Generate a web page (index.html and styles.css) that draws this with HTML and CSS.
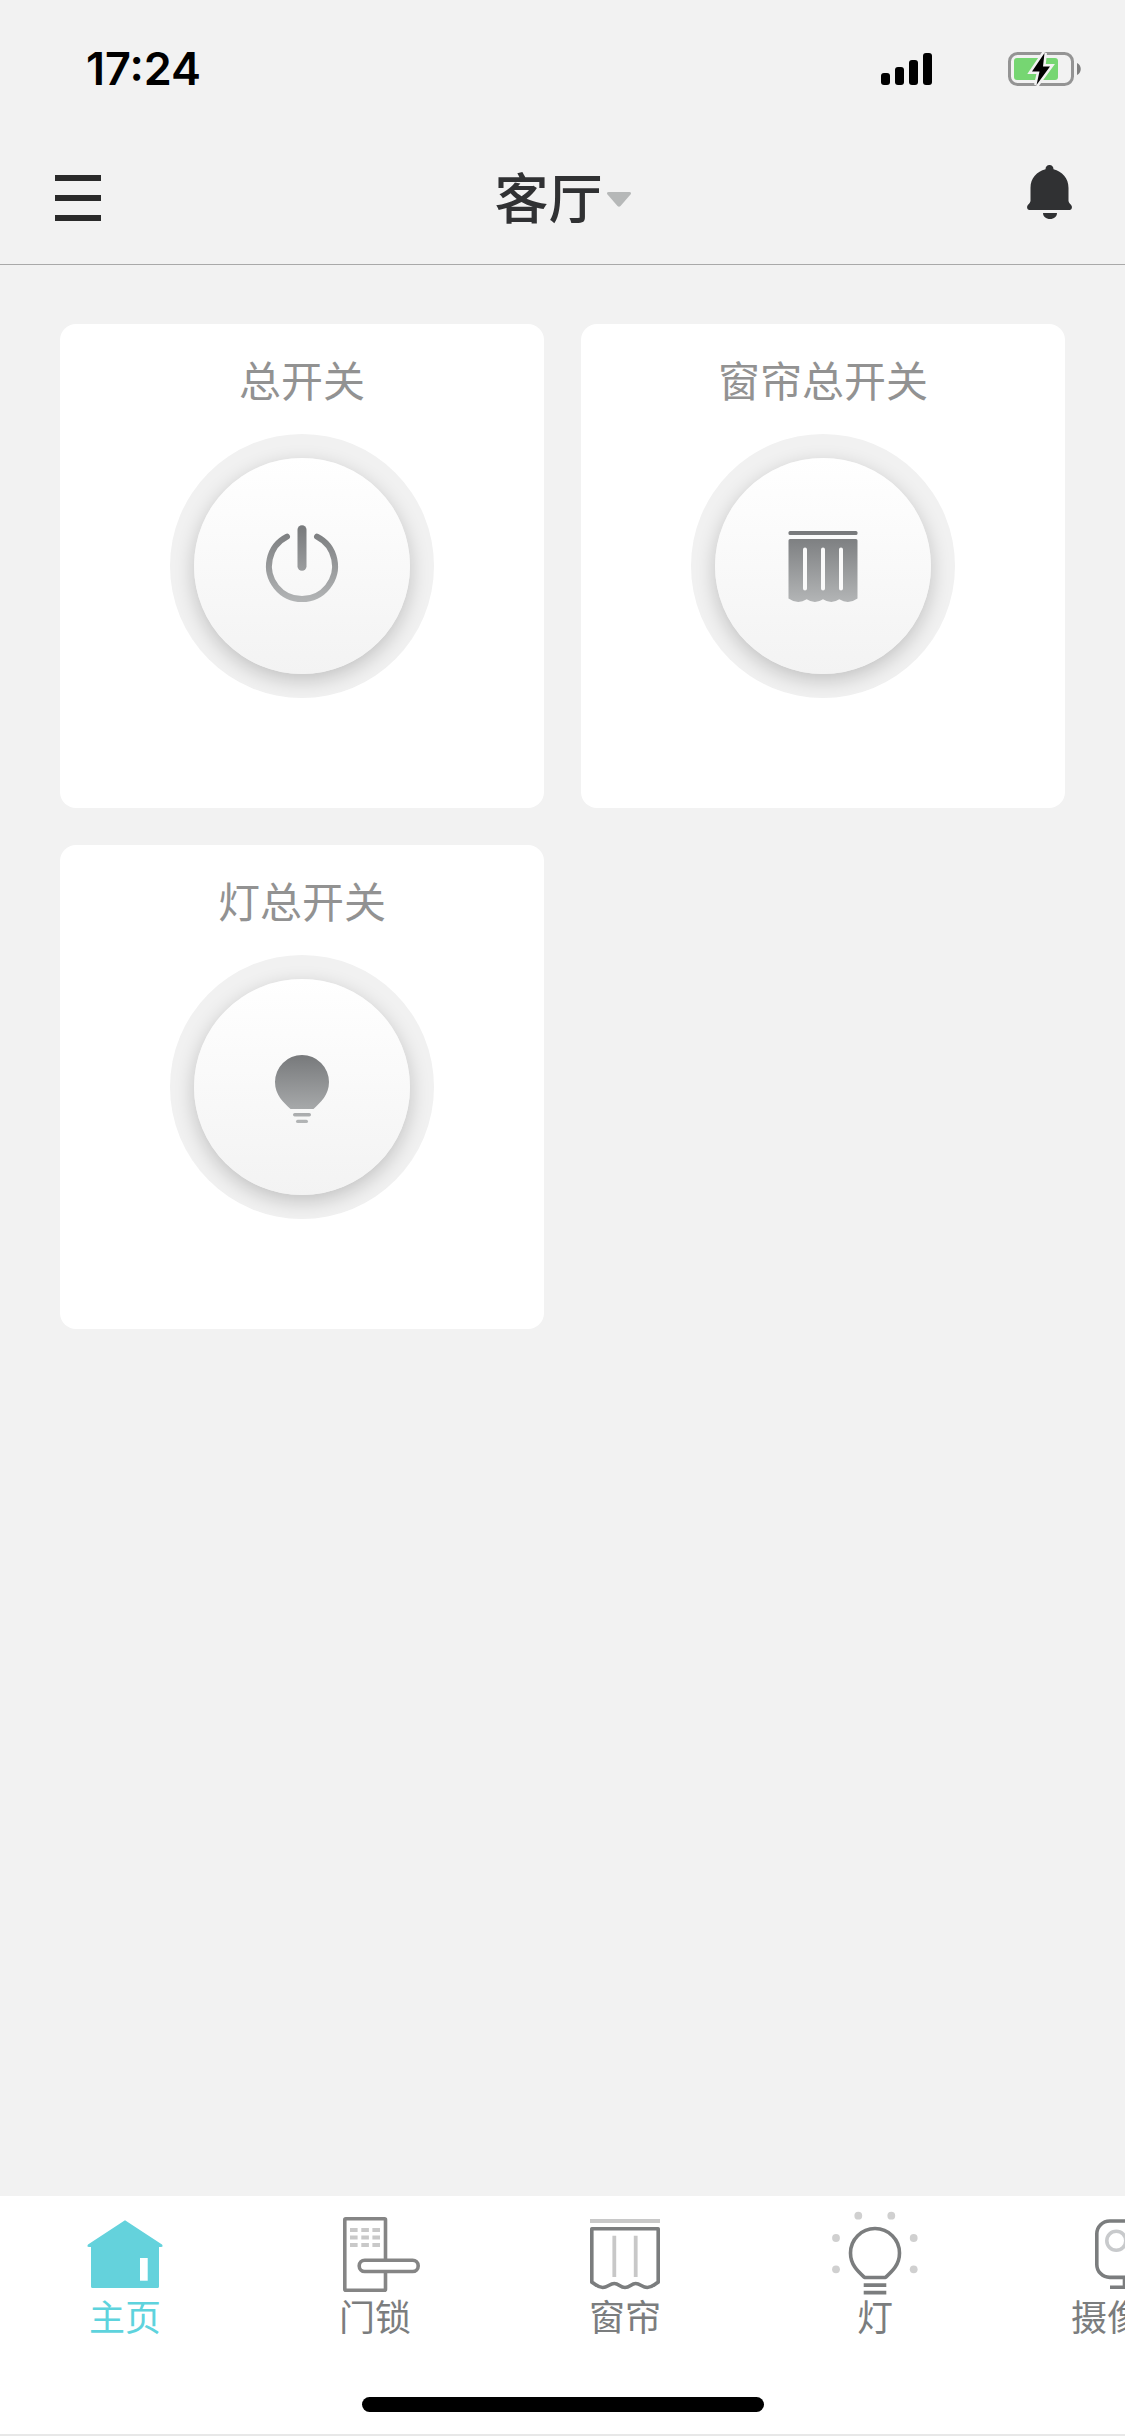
FILE: index.html
```html
<!DOCTYPE html>
<html lang="zh-CN">
<head>
<meta charset="utf-8">
<meta name="viewport" content="width=device-width, initial-scale=1">
<title>客厅</title>
<link rel="stylesheet" href="styles.css">
</head>
<body>
<div class="status-bar">
  <time class="clock">17:24</time>
  <div class="status-icons">
    <svg class="signal" viewBox="0 0 51 32" width="51" height="32" aria-hidden="true">
      <rect x="0" y="20" width="9" height="12" rx="3"/>
      <rect x="14" y="14" width="9" height="18" rx="3"/>
      <rect x="28" y="7" width="9" height="25" rx="3"/>
      <rect x="42" y="0" width="9" height="32" rx="3"/>
    </svg>
    <svg class="battery" viewBox="0 0 74 36" width="74" height="36" aria-hidden="true">
      <rect x="1.5" y="2.500" width="63" height="31" rx="8" fill="none" stroke="#949494" stroke-width="3"/>
      <rect x="6" y="7" width="44" height="22" rx="3" fill="#76d672"/>
      <path d="M69 12c5 2 5 10 0 12z" fill="#808080"/>
      <path d="M36.500 2 24 20.500h7.500L28.500 34 42 15.500h-7z" fill="#000" stroke="#f2f2f2" stroke-width="5" paint-order="stroke"/>
    </svg>
  </div>
</div>

<header class="top-bar">
  <button class="icon-button" type="button" aria-label="菜单">
    <svg viewBox="0 0 46 46" width="46" height="46" fill="#2a2a2a" aria-hidden="true">
      <rect width="46" height="6"/><rect y="20" width="46" height="6"/><rect y="40" width="46" height="6"/>
    </svg>
  </button>
  <button class="room" type="button" aria-haspopup="listbox">
    <span>客厅</span>
    <svg viewBox="0 0 24 15" width="24" height="15" aria-hidden="true"><path d="M1.500 0h21q2.500.5 1 2.500L13.500 14q-1.500 1.500-3 0L.5 2.500Q-1 .5 1.500 0z" fill="#b6b8b8"/></svg>
  </button>
  <button class="icon-button" type="button" aria-label="通知">
    <svg viewBox="0 0 45 66" width="45" height="66" fill="#303133" aria-hidden="true">
      <path d="M22.500 0c2.500 0 4 1.700 4 4.300C35 6.500 41.500 13 41.500 23v13c.3 2.500 2.500 3.200 3.200 5 .7 2-.2 4-2.200 4h-40c-2 0-2.900-2-2.200-4 .7-1.800 2.900-2.500 3.200-5V23c0-10 6.500-16.500 15-18.700 0-2.600 1.500-4.300 4-4.300z"/>
      <path d="M16 48h14c0 3.500-3 6-7 6s-7-2.500-7-6z"/>
    </svg>
  </button>
</header>

<main class="cards">
  <section class="card">
    <h2 class="card-title" id="all">总开关</h2>
    <button class="knob" type="button" aria-labelledby="all">
      <svg viewBox="0 0 216 216" aria-hidden="true">
        <defs><linearGradient id="g-power" gradientUnits="userSpaceOnUse" x1="0" y1="67" x2="0" y2="144"><stop offset="0" stop-color="#77797b"/><stop offset="1" stop-color="#b3b5b6"/></linearGradient></defs>
        <path d="M93 78.600a33 33 0 1 0 30 0" fill="none" stroke="url(#g-power)" stroke-linecap="round" stroke-width="6"/>
        <rect x="103.500" y="67.300" width="9" height="45.400" rx="4.500" fill="url(#g-power)"/>
      </svg>
    </button>
  </section>
  <section class="card">
    <h2 class="card-title" id="curtains">窗帘总开关</h2>
    <button class="knob" type="button" aria-labelledby="curtains">
      <svg viewBox="0 0 216 216" aria-hidden="true">
        <defs><linearGradient id="g-curtain" gradientUnits="userSpaceOnUse" x1="0" y1="73" x2="0" y2="144"><stop offset="0" stop-color="#77797b"/><stop offset="1" stop-color="#b3b5b6"/></linearGradient></defs>
        <g fill="url(#g-curtain)">
          <rect x="73.500" y="73" width="69" height="4" rx="1.500"/>
          <path d="M75 81h66q1.500 0 1.500 1.500v58q-9 6.500-18.200.8-8 5.500-16.300 0-8 5.500-16.300 0-9 5.700-18.200-.8v-58q0-1.500 1.500-1.500z"/>
        </g>
        <path d="M90 91.500v39M108 91.500v39M126 91.500v39" stroke="#fafafa" stroke-width="4" stroke-linecap="round"/>
      </svg>
    </button>
  </section>
  <section class="card">
    <h2 class="card-title" id="lights">灯总开关</h2>
    <button class="knob" type="button" aria-labelledby="lights">
      <svg viewBox="0 0 216 216" aria-hidden="true">
        <defs><linearGradient id="g-bulb" gradientUnits="userSpaceOnUse" x1="0" y1="76" x2="0" y2="144"><stop offset="0" stop-color="#77797b"/><stop offset="1" stop-color="#b3b5b6"/></linearGradient></defs>
        <g fill="url(#g-bulb)">
          <path d="M96.500 130c-7-6.500-15.500-14-15.500-27a27 27 0 0 1 54 0c0 13-8.500 20.500-15.500 27z"/>
          <rect x="99" y="134" width="18" height="3.400" rx="1.700"/>
          <rect x="102" y="140.700" width="12" height="3.400" rx="1.700"/>
        </g>
      </svg>
    </button>
  </section>
</main>

<footer class="bottom">
  <nav class="tabs" aria-label="设备">
    <a class="tab tab-active" href="#home" aria-current="page">
      <svg viewBox="0 0 100 90" width="100" height="90" aria-hidden="true">
        <path d="M50 14.300 87 38.500q1.500 2.500-1 2.500H84v39.500q0 1.500-1.500 1.500h-65Q16 82 16 80.500V41h-2q-2.500 0-1-2.500z" fill="#64d2dc"/>
        <rect x="65" y="52" width="7.700" height="22.700" fill="#fff"/>
      </svg>
      <span>主页</span>
    </a>
    <a class="tab" href="#locks">
      <svg viewBox="0 0 100 90" width="100" height="90" fill="none" aria-hidden="true">
        <rect x="19.800" y="12.800" width="40.700" height="71.400" rx="1" stroke="#858585" stroke-width="3.600"/>
        <path d="M25 24h7.600M36.300 24h7.600M47.400 24H55M25 31.500h7.600M36.300 31.500h7.600M47.400 31.500H55M25 39h7.600M36.300 39h7.600M47.400 39H55" stroke="#c9c9c9" stroke-width="3.800"/>
        <rect x="34.200" y="54.200" width="59" height="11.300" rx="5.600" fill="#fff" stroke="#858585" stroke-width="3.600"/>
      </svg>
      <span>门锁</span>
    </a>
    <a class="tab" href="#curtains-tab">
      <svg viewBox="0 0 100 90" width="100" height="90" fill="none" aria-hidden="true">
        <path d="M15 15h70M39.300 29.700V71M60.700 29.700V71" stroke="#c8c8c8" stroke-width="3.800"/>
        <path d="M16.800 22.800h66.400v53.400C79 78.500 77 81.500 72.300 81.500c-5 0-7-4-11.600-4S55 81.500 50 81.500s-6-4-10.700-4-6.600 4-11.600 4c-4.700 0-6.700-3-10.900-5.300z" stroke="#7b7d7e" stroke-width="3.600" stroke-linejoin="round"/>
      </svg>
      <span>窗帘</span>
    </a>
    <a class="tab" href="#lights-tab">
      <svg viewBox="0 0 100 90" width="100" height="90" fill="none" aria-hidden="true">
        <g fill="#d0d0d0"><circle cx="33.300" cy="9.700" r="3.900"/><circle cx="66.300" cy="9.700" r="3.900"/><circle cx="11" cy="32" r="3.900"/><circle cx="88.700" cy="32" r="3.900"/><circle cx="11" cy="63.300" r="3.900"/><circle cx="88.700" cy="63.300" r="3.900"/></g>
        <path d="M39.500 71.500C33 65.500 25.500 59 25.500 47a24.500 24.500 0 0 1 49 0c0 12-7.500 18.500-14 24.500z" stroke="#7b7d7e" stroke-width="3.600" stroke-linejoin="round"/>
        <path d="M38.700 79.100h22.600M38.700 86.600h22.600" stroke="#7b7d7e" stroke-width="3.700"/>
      </svg>
      <span>灯</span>
    </a>
    <a class="tab" href="#cameras">
      <svg viewBox="0 0 100 90" width="100" height="90" fill="none" aria-hidden="true">
        <rect x="21.800" y="15" width="56.400" height="56.400" rx="13" stroke="#7b7d7e" stroke-width="3.600"/>
        <circle cx="41.300" cy="34.700" r="9.500" stroke="#c8cacc" stroke-width="3.600"/>
        <path d="M49.500 72v9.300M35 81.300h30" stroke="#7b7d7e" stroke-width="3.600"/>
      </svg>
      <span>摄像头</span>
    </a>
  </nav>
  <div class="home-indicator"></div>
</footer>
</body>
</html>
```
FILE: styles.css
```css
* {
  box-sizing: border-box;
}

body {
  margin: 0;
  min-height: 100vh;
  display: flex;
  flex-direction: column;
  background: #f2f2f2;
  color: #303133;
  font-family: Inter, "Noto Sans CJK SC", sans-serif;
}

button {
  padding: 0;
  border: 0;
  background: none;
  color: inherit;
  font: inherit;
}

svg {
  display: block;
}

.status-bar {
  display: flex;
  align-items: center;
  justify-content: space-between;
  height: 138px;
  padding: 0 43px 0 86px;
}

.clock {
  color: #000;
  font-size: 45px;
  font-weight: 600;
  line-height: 48px;
}

.status-icons {
  display: flex;
  align-items: center;
  gap: 76px;
}

.top-bar {
  display: grid;
  grid-template-columns: 1fr auto 1fr;
  align-items: center;
  height: 127px;
  padding: 0 53px 6px 55px;
  border-bottom: 1px solid #a9a9a9;
}

.icon-button {
  justify-self: start;
}

.icon-button:last-child {
  justify-self: end;
}

.room {
  display: flex;
  align-items: center;
  gap: 4px;
  padding: 3px 2px 0 0;
  font-size: 54px;
  font-weight: 500;
  line-height: 72px;
}

.cards {
  flex: 1;
  display: grid;
  grid-template-columns: 1fr 1fr;
  align-content: start;
  gap: 37px;
  padding: 59px 60px;
}

.card {
  display: flex;
  flex-direction: column;
  align-items: center;
  gap: 22px;
  aspect-ratio: 1;
  padding-top: 28px;
  border-radius: 16px;
  background: #fff;
}

.card-title {
  margin: 0;
  color: #929292;
  font-size: 42px;
  font-weight: 400;
  line-height: 60px;
}

.knob {
  width: 264px;
  height: 264px;
  padding: 24px;
  border-radius: 50%;
  background: #f1f1f1;
  overflow: hidden;
}

.knob svg {
  width: 216px;
  height: 216px;
  border-radius: 50%;
  background: linear-gradient(#fff, #f3f3f3);
  box-shadow: 0 6px 20px rgba(0, 0, 0, 0.2);
}

.bottom {
  overflow: hidden;
  padding: 10px 0 22px;
  border-bottom: 2px solid #e8e8e8;
  background: #fff;
}

.tabs {
  display: grid;
  grid-auto-flow: column;
  grid-auto-columns: 22.222%;
}

.tab {
  display: flex;
  flex-direction: column;
  align-items: center;
  color: #7b7d7e;
  font-size: 36px;
  font-weight: 400;
  line-height: 44px;
  text-decoration: none;
}

.tab-active {
  color: #5ed3dd;
}

.home-indicator {
  width: 402px;
  height: 15px;
  margin: 57px auto 0;
  border-radius: 8px;
  background: #000;
}
```
